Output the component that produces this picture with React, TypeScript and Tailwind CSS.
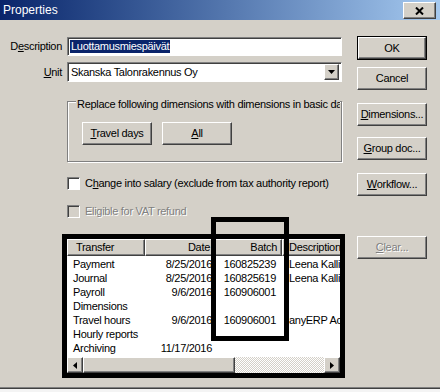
import React from "react";

const raised =
  "border border-t-white border-l-white border-r-[#404040] border-b-[#404040] shadow-[inset_-1px_-1px_#808080]";
const sunken =
  "border border-t-[#808080] border-l-[#808080] border-r-white border-b-white shadow-[inset_1px_1px_#404040]";

function Btn({
  children,
  className = "",
  isDefault = false,
  disabled = false,
}: {
  children: React.ReactNode;
  className?: string;
  isDefault?: boolean;
  disabled?: boolean;
}) {
  const inner = (
    <div
      className={`flex h-full w-full items-center justify-center whitespace-nowrap bg-[#d4d0c8] ${raised} ${
        disabled ? "text-[#808080] [text-shadow:1px_1px_#fff]" : "text-black"
      }`}
    >
      {children}
    </div>
  );
  if (isDefault) {
    return <div className={`border border-black ${className}`}>{inner}</div>;
  }
  return <div className={className}>{inner}</div>;
}

function Check({ label, disabled = false }: { label: React.ReactNode; disabled?: boolean }) {
  return (
    <div className="flex h-[13px] items-center">
      <div className={`h-[13px] w-[13px] flex-none ${sunken} ${disabled ? "bg-[#d4d0c8]" : "bg-white"}`} />
      <span
        className={`ml-[5px] whitespace-nowrap ${
          disabled ? "text-[#808080] [text-shadow:1px_1px_#fff]" : ""
        }`}
      >
        {label}
      </span>
    </div>
  );
}

const rows = [
  ["Payment", "8/25/2016", "160825239", "Leena Kallio"],
  ["Journal", "8/25/2016", "160825619", "Leena Kallio"],
  ["Payroll", "9/6/2016", "160906001", ""],
  ["Dimensions", "", "", ""],
  ["Travel hours", "9/6/2016", "160906001", "anyERP Account"],
  ["Hourly reports", "", "", ""],
  ["Archiving", "11/17/2016", "", ""],
];

export default function App() {
  return (
    <div className="relative flex h-[392px] w-[440px] flex-col overflow-hidden bg-[#d4d0c8] font-['Liberation_Sans',Arial,sans-serif] text-[11px] leading-[13px] tracking-[-0.3px] text-black">
      {/* Title bar */}
      <div className="flex h-[20px] flex-none items-center bg-gradient-to-r from-[#0a246a] to-[#a6caf0] pl-[3px] pr-[4px] pt-px">
        <span className="text-[12px] tracking-normal text-white">Properties</span>
        <Btn className="ml-auto h-[17px] w-[33px]">
          <svg width="9" height="8" viewBox="0 0 9 8">
            <path d="M1 0.5L8 7.5M8 0.5L1 7.5" stroke="#000" strokeWidth="2" />
          </svg>
        </Btn>
      </div>

      <div className="flex h-[367px] flex-none">
        {/* Left part */}
        <div className="flex w-[345px] flex-none flex-col pt-[17px]">
          <div className="flex items-center">
            <span className="w-[67px] pr-[5px] text-right">
              D<span className="underline">e</span>scription
            </span>
            <div className={`flex h-[19px] w-[275px] items-center bg-white px-[2px] ${sunken}`}>
              <span className="bg-[#0a246a] px-px text-white">Luottamusmiespäivät</span>
            </div>
          </div>
          <div className="mt-[6px] flex items-center">
            <span className="w-[67px] pr-[5px] text-right">
              <span className="underline">U</span>nit
            </span>
            <div className={`flex h-[20px] w-[275px] items-center bg-white pl-[3px] pr-[2px] ${sunken}`}>
              <span>Skanska Talonrakennus Oy</span>
              <div className={`ml-auto flex h-[16px] w-[15px] items-center justify-center bg-[#d4d0c8] ${raised}`}>
                <svg width="7" height="4" viewBox="0 0 7 4">
                  <path d="M0 0h7L3.5 4z" fill="#000" />
                </svg>
              </div>
            </div>
          </div>

          {/* Group box */}
          <div className="relative ml-[67px] mt-[19px] h-[61px] w-[275px] border border-[#808080] shadow-[inset_1px_1px_#fff,1px_1px_#fff]">
            <div className="absolute left-[8px] right-[1px] top-[-4px] overflow-hidden whitespace-nowrap bg-[#d4d0c8] pl-px">
              Replace following dimensions with dimensions in basic data
            </div>
            <div className="ml-[14px] mt-[20px] flex gap-[10px]">
              <Btn className="h-[23px] w-[70px]">
                <span>
                  <span className="underline">T</span>ravel days
                </span>
              </Btn>
              <Btn className="h-[23px] w-[70px]">
                <span>
                  <span className="underline">A</span>ll
                </span>
              </Btn>
            </div>
          </div>

          <div className="ml-[67px] mt-[15px]">
            <Check
              label={
                <>
                  C<span className="underline">h</span>ange into salary (exclude from tax authority report)
                </>
              }
            />
          </div>
          <div className="ml-[67px] mt-[15px]">
            <Check label="Eligible for VAT refund" disabled />
          </div>

          {/* List view */}
          <div className="ml-[62px] mt-[16px] grid h-[144px] w-[283px] flex-none grid-rows-[17px_1fr_16px] overflow-hidden border-[5px] border-black bg-white">
            <div className="flex h-[17px] overflow-hidden whitespace-nowrap">
              <div className={`w-[78px] flex-none bg-[#d4d0c8] pl-[8px] pt-px ${raised}`}>Transfer</div>
              <div className={`w-[70px] flex-none bg-[#d4d0c8] pr-[4px] pt-px text-right ${raised}`}>Date</div>
              <div className={`w-[67px] flex-none bg-[#d4d0c8] pr-[4px] pt-px text-right ${raised}`}>Batch</div>
              <div className={`w-[80px] flex-none bg-[#d4d0c8] pl-[6px] pt-px ${raised}`}>Description</div>
            </div>
            <div className="overflow-hidden pt-px">
              {rows.map((r) => (
                <div key={r[0]} className="flex h-[14px] items-center whitespace-nowrap">
                  <div className="w-[78px] flex-none pl-[6px]">{r[0]}</div>
                  <div className="w-[70px] flex-none pr-[3px] text-right">{r[1]}</div>
                  <div className="w-[67px] flex-none pr-[6px] text-right">{r[2]}</div>
                  <div className="w-[80px] flex-none overflow-hidden pl-[7px]">{r[3]}</div>
                </div>
              ))}
            </div>
            <div className="flex h-[16px] bg-[#d4d0c8]">
              <div className={`flex w-[16px] flex-none items-center justify-center ${raised}`}>
                <svg width="4" height="7" viewBox="0 0 4 7">
                  <path d="M4 0v7L0 3.5z" fill="#000" />
                </svg>
              </div>
              <div className={`w-[152px] flex-none ${raised}`} />
              <div className="flex-1 bg-[repeating-conic-gradient(#d4d0c8_0%_25%,#ffffff_0%_50%)] bg-[length:2px_2px]" />
              <div className={`flex w-[16px] flex-none items-center justify-center ${raised}`}>
                <svg width="4" height="7" viewBox="0 0 4 7">
                  <path d="M0 0v7L4 3.5z" fill="#000" />
                </svg>
              </div>
            </div>
          </div>
        </div>

        {/* Right buttons */}
        <div className="ml-[12px] flex flex-col pt-[16px]">
          <Btn isDefault className="h-[24px] w-[70px]">OK</Btn>
          <Btn className="mt-[7px] h-[23px] w-[70px]">Cancel</Btn>
          <Btn className="mt-[13px] h-[23px] w-[70px]">
            <span>
              <span className="underline">D</span>imensions...
            </span>
          </Btn>
          <Btn className="mt-[11px] h-[23px] w-[70px]">
            <span>
              <span className="underline">G</span>roup doc...
            </span>
          </Btn>
          <Btn className="mt-[13px] h-[23px] w-[70px]">
            <span>
              <span className="underline">W</span>orkflow...
            </span>
          </Btn>
          <Btn disabled className="mt-[40px] h-[23px] w-[70px]">
            <span>
              <span className="underline">C</span>lear...
            </span>
          </Btn>
        </div>
      </div>

      {/* Bottom edge */}
      <div className="h-px flex-none bg-[#808080]" />
      <div className="h-px flex-none bg-[#404040]" />
      <div className="flex-1 bg-[#f4f4f4]" />

      {/* Annotation box around Batch column */}
      <div className="pointer-events-none absolute left-[211px] top-[217px] h-[124px] w-[78px] border-[5px] border-black" />
    </div>
  );
}
